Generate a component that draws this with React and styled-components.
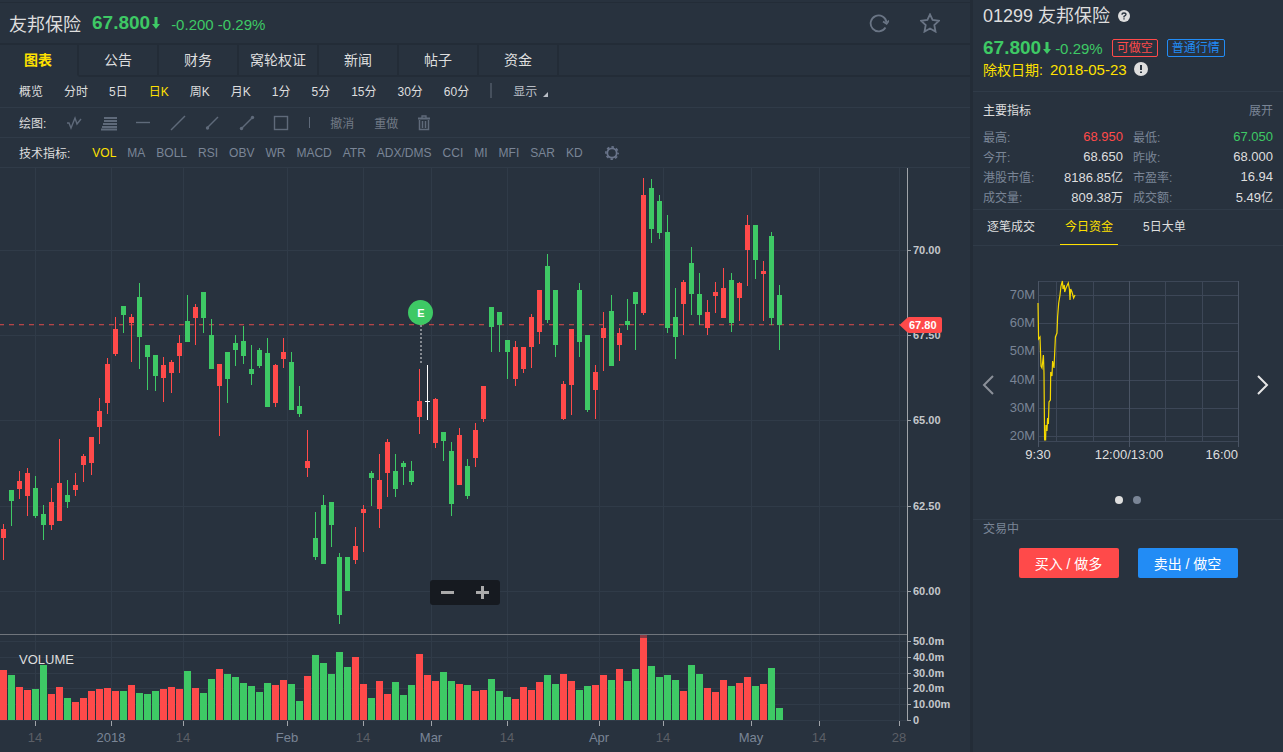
import React, { useState } from "react";
import styled, { createGlobalStyle } from "styled-components";

const GREEN = "#3ec965";
const RED = "#ff4a4a";
const YELLOW = "#ffe100";
const GRAY = "#7a8596";
const BG = "#28323e";
const LINE = "#303b48";
const DARK = "#232c37";

const tabs = ["图表", "公告", "财务", "窝轮权证", "新闻", "帖子", "资金"];
const periods = ["概览", "分时", "5日", "日K", "周K", "月K", "1分", "5分", "15分", "30分", "60分"];
const indicators = [
  "VOL", "MA", "BOLL", "RSI", "OBV", "WR", "MACD", "ATR",
  "ADX/DMS", "CCI", "MI", "MFI", "SAR", "KD",
];

const stats = [
  { label: "最高:", value: "68.950", color: RED },
  { label: "最低:", value: "67.050", color: GREEN },
  { label: "今开:", value: "68.650" },
  { label: "昨收:", value: "68.000" },
  { label: "港股市值:", value: "8186.85", unit: "亿" },
  { label: "市盈率:", value: "16.94" },
  { label: "成交量:", value: "809.38", unit: "万" },
  { label: "成交额:", value: "5.49", unit: "亿" },
];

// [color, high, low, body top, body bottom, volume]
const candles = [
  ["r", 524, 560, 529, 538, 50], ["g", 490, 526, 490, 501, 45],
  ["r", 471, 499, 481, 489, 33], ["r", 468, 516, 473, 496, 30],
  ["g", 476, 518, 488, 516, 31], ["g", 505, 540, 514, 525, 55],
  ["r", 488, 530, 502, 525, 26], ["r", 439, 521, 483, 521, 33],
  ["g", 480, 508, 495, 502, 22], ["r", 473, 496, 485, 490, 18],
  ["r", 454, 482, 456, 465, 22], ["r", 437, 475, 437, 463, 29],
  ["r", 398, 444, 411, 427, 31], ["r", 358, 414, 364, 403, 32],
  ["r", 317, 356, 329, 354, 29], ["g", 306, 333, 306, 315, 29],
  ["r", 314, 362, 317, 323, 35], ["g", 283, 369, 297, 337, 27],
  ["g", 345, 390, 345, 357, 26], ["g", 355, 391, 355, 376, 29],
  ["r", 357, 402, 365, 378, 31], ["r", 360, 393, 362, 373, 33],
  ["r", 335, 373, 343, 356, 31], ["g", 295, 342, 321, 342, 49],
  ["r", 304, 345, 307, 318, 32], ["g", 292, 333, 292, 318, 27],
  ["g", 319, 369, 335, 369, 41], ["r", 364, 436, 364, 386, 51],
  ["g", 352, 403, 352, 379, 46], ["g", 335, 366, 343, 350, 43],
  ["g", 326, 364, 341, 356, 37], ["g", 345, 385, 369, 374, 34],
  ["g", 348, 368, 350, 366, 28], ["g", 338, 407, 353, 407, 37],
  ["r", 364, 407, 365, 403, 35], ["r", 338, 368, 352, 359, 40],
  ["g", 352, 410, 362, 410, 36], ["g", 386, 417, 406, 414, 19],
  ["r", 430, 477, 461, 468, 44], ["g", 512, 560, 538, 557, 65],
  ["g", 495, 564, 505, 564, 57], ["g", 502, 547, 502, 525, 46],
  ["g", 553, 624, 557, 615, 68], ["g", 557, 591, 557, 591, 53],
  ["r", 527, 564, 546, 560, 63], ["r", 505, 552, 509, 513, 36],
  ["g", 471, 506, 473, 478, 22], ["r", 454, 528, 480, 509, 39],
  ["r", 439, 497, 442, 473, 26], ["g", 454, 497, 471, 489, 38],
  ["g", 461, 485, 463, 467, 25], ["g", 461, 485, 471, 482, 35],
  ["r", 369, 434, 401, 417, 66], ["w", 365, 420, 401, 402, 45],
  ["r", 398, 448, 399, 443, 39], ["g", 432, 461, 432, 441, 48],
  ["g", 442, 516, 451, 504, 39], ["r", 428, 485, 435, 485, 36],
  ["g", 459, 499, 466, 496, 35], ["r", 423, 467, 430, 458, 29],
  ["r", 386, 422, 386, 419, 30], ["g", 307, 352, 307, 327, 41],
  ["g", 312, 352, 312, 325, 29], ["g", 340, 379, 340, 352, 23],
  ["r", 341, 386, 347, 379, 21], ["r", 347, 373, 347, 369, 33],
  ["r", 314, 368, 317, 347, 30], ["r", 290, 344, 290, 332, 38],
  ["g", 254, 323, 266, 320, 45], ["g", 290, 357, 290, 345, 36],
  ["r", 381, 420, 384, 419, 46], ["r", 329, 415, 329, 385, 39],
  ["g", 283, 357, 290, 342, 30], ["g", 335, 412, 335, 410, 34],
  ["r", 365, 419, 372, 390, 35], ["r", 312, 371, 328, 338, 45],
  ["g", 295, 366, 311, 366, 40], ["r", 328, 361, 333, 345, 51],
  ["g", 299, 330, 321, 325, 39], ["g", 292, 350, 292, 304, 51],
  ["r", 178, 315, 195, 313, 85], ["g", 179, 243, 188, 229, 54],
  ["g", 195, 239, 201, 233, 43], ["g", 215, 333, 232, 328, 45],
  ["g", 288, 359, 317, 337, 40], ["r", 280, 335, 282, 304, 29],
  ["g", 247, 315, 263, 294, 55], ["g", 273, 325, 294, 315, 46],
  ["r", 300, 335, 312, 328, 32], ["r", 282, 313, 292, 296, 28],
  ["r", 268, 318, 288, 318, 40], ["g", 273, 332, 280, 323, 34],
  ["r", 282, 321, 283, 298, 37], ["r", 215, 286, 225, 250, 43],
  ["g", 225, 279, 225, 260, 34], ["r", 261, 321, 271, 274, 36],
  ["g", 232, 325, 236, 318, 52], ["g", 285, 350, 295, 325, 12],
];

const candleColors = { r: RED, g: GREEN, w: "#ffffff" };

const dates = [
  [35, "14"], [111, "2018"], [183, "14"], [287, "Feb"], [363, "14"], [431, "Mar"],
  [507, "14"], [599, "Apr"], [663, "14"], [751, "May"], [819, "14"], [899, "28"],
];
const prices = [[250, "70.00"], [335, "67.50"], [420, "65.00"], [506, "62.50"], [591, "60.00"]];
const volumes = [
  [641, "50.0m"], [657, "40.0m"], [673, "30.0m"], [688, "20.0m"], [704, "10.00m"], [720, "0"],
];

export default function App() {
  const [tab, setTab] = useState("图表");
  const [period, setPeriod] = useState("日K");
  const [indicator, setIndicator] = useState("VOL");

  return (
    <>
      <GlobalStyle />
      <Page>
        <Main>
          <TopStrip />
          <Header>
            <StockName>友邦保险</StockName>
            <Price>67.800</Price>
            <DownArrow />
            <Change>-0.200 -0.29%</Change>
            <HeaderActions>
              <IconButton aria-label="刷新">
                <RefreshIcon />
              </IconButton>
              <IconButton aria-label="收藏">
                <StarIcon />
              </IconButton>
            </HeaderActions>
          </Header>
          <Tabs>
            {tabs.map((t) => (
              <Tab key={t} $active={t === tab} onClick={() => setTab(t)}>
                {t}
              </Tab>
            ))}
            <TabsRest />
          </Tabs>
          <PeriodBar $gap={21}>
            {periods.map((p) => (
              <ToolButton key={p} $active={p === period} $light onClick={() => setPeriod(p)}>
                {p}
              </ToolButton>
            ))}
            <Divider />
            <DisplayButton>
              显示
              <svg width="5" height="5">
                <path d="M5 0V5H0Z" fill="#b9bec6" />
              </svg>
            </DisplayButton>
          </PeriodBar>
          <Toolbar $gap={20}>
            <ToolLabel>绘图:</ToolLabel>
            <DrawTools />
            <ThinDivider />
            <ToolButton $muted>撤消</ToolButton>
            <ToolButton $muted>重做</ToolButton>
            <IconButton aria-label="删除">
              <TrashIcon />
            </IconButton>
          </Toolbar>
          <Toolbar $gap={22}>
            <ToolLabel>技术指标:</ToolLabel>
            <Indicators>
              {indicators.map((name) => (
                <ToolButton
                  key={name}
                  $active={name === indicator}
                  onClick={() => setIndicator(name)}
                >
                  {name}
                </ToolButton>
              ))}
            </Indicators>
            <IconButton aria-label="设置">
              <GearIcon />
            </IconButton>
          </Toolbar>
          <ChartArea>
            <StockChart />
            <ZoomControl>
              <ZoomButton aria-label="缩小">
                <svg width="13" height="13">
                  <rect y="5" width="13" height="3" fill="#aaaaaa" />
                </svg>
              </ZoomButton>
              <ZoomButton aria-label="放大">
                <svg width="13" height="13" fill="#aaaaaa">
                  <rect y="5" width="13" height="3" />
                  <rect x="5" width="3" height="13" />
                </svg>
              </ZoomButton>
            </ZoomControl>
          </ChartArea>
        </Main>
        <SidePanel />
      </Page>
    </>
  );
}

function SidePanel() {
  const [tab, setTab] = useState("今日资金");

  return (
    <Side>
      <Quote>
        <QuoteTitle>
          01299 友邦保险
          <svg width="12" height="12">
            <circle cx="6" cy="6" r="6" fill="#dedede" />
            <path
              d="M4 4.8Q4 3 6 3Q8 3 8 4.6Q8 5.6 6 6.4V7.4M6 8.2V9.6"
              fill="none"
              stroke={BG}
              strokeWidth="1.3"
            />
          </svg>
        </QuoteTitle>
        <QuoteRow>
          <Price>67.800</Price>
          <DownArrow />
          <Change>-0.29%</Change>
          <Tag $color={RED}>可做空</Tag>
          <Tag $color="#228cf5">普通行情</Tag>
        </QuoteRow>
        <DateRow>
          除权日期: <DateValue>2018-05-23</DateValue>
          <svg width="14" height="14">
            <circle cx="7" cy="7" r="7" fill="#dedede" />
            <path d="M7 3V8M7 9.4V11" stroke={BG} strokeWidth="2" />
          </svg>
        </DateRow>
      </Quote>
      <Stats>
        <StatsHead>
          <h3>主要指标</h3>
          <MoreLink href="#more">展开</MoreLink>
        </StatsHead>
        <StatsGrid>
          {stats.map((s) => (
            <Stat key={s.label}>
              <dt>{s.label}</dt>
              <StatValue $color={s.color}>
                {s.value}
                {s.unit ? <small>{s.unit}</small> : ""}
              </StatValue>
            </Stat>
          ))}
        </StatsGrid>
      </Stats>
      <SideTabs>
        {["逐笔成交", "今日资金", "5日大单"].map((t) => (
          <SideTab key={t} $active={t === tab} onClick={() => setTab(t)}>
            {t}
          </SideTab>
        ))}
      </SideTabs>
      <Carousel>
        <IconButton aria-label="上一页">
          <svg width="12" height="20">
            <path d="M11 1L2 10L11 19" fill="none" stroke="#8b9099" strokeWidth="2" />
          </svg>
        </IconButton>
        <FundChart />
        <IconButton aria-label="下一页">
          <svg width="12" height="20">
            <path d="M1 1L10 10L1 19" fill="none" stroke="#e6e6e6" strokeWidth="2" />
          </svg>
        </IconButton>
      </Carousel>
      <Dots>
        <Dot $active aria-label="1" />
        <Dot aria-label="2" />
      </Dots>
      <Trade>
        <Status>交易中</Status>
        <TradeButtons>
          <TradeButton $color={RED}>买入 / 做多</TradeButton>
          <TradeButton $color="#228cf5">卖出 / 做空</TradeButton>
        </TradeButtons>
      </Trade>
    </Side>
  );
}

function StockChart() {
  return (
    <ChartSvg width="970" height="584" viewBox="0 168 970 584" shapeRendering="crispEdges">
      {dates.map(([x]) => (
        <rect key={x} x={x} y="168" width="1" height="552" fill={LINE} />
      ))}
      {[...prices, ...volumes].map(([y]) => (
        <rect key={y} x="0" y={y} width="907" height="1" fill={LINE} />
      ))}
      <rect x="0" y="634" width="907" height="1" fill="#70757c" />
      {candles.map(([c, , , , , vol], i) => (
        <rect
          key={i}
          x={i * 8}
          y={720 - vol}
          width="7"
          height={vol}
          fill={c === "g" ? GREEN : RED}
        />
      ))}
      <rect x="640" y="635" width="7" height="3" fill="#8a3b43" />
      <line
        x1="-1" y1="324.5" x2="900" y2="324.5"
        stroke="#b54448" strokeDasharray="5 5"
      />
      <line
        x1="-1" y1="325.5" x2="900" y2="325.5"
        stroke="#523840" strokeDasharray="5 5"
      />
      {candles.map(([c, high, low, top, bottom], i) => (
        <g key={i} fill={candleColors[c]}>
          <rect x={i * 8 + 3} y={high} width="1" height={low - high} />
          <rect x={i * 8 + 1} y={top} width="5" height={bottom - top} />
        </g>
      ))}

      <rect x="907" y="168" width="1" height="553" fill="#a0a4a9" />
      {[...prices, ...volumes].map(([y, text]) => (
        <g key={y}>
          <rect x="908" y={y} width="3" height="1" fill="#a0a4a9" />
          <AxisText x="913" y={y + 4}>{text}</AxisText>
        </g>
      ))}
      {dates.map(([x, text]) => (
        <g key={x}>
          <rect x={x} y="721" width="1" height="5" fill="#a0a4a9" />
          <DateText x={x} y="742" $month={text !== "14" && text !== "28"}>
            {text}
          </DateText>
        </g>
      ))}

      <line x1="421" y1="325" x2="421" y2="365" stroke="#858a91" strokeWidth="2" strokeDasharray="2 2" />
      <g shapeRendering="geometricPrecision">
        <circle cx="420.5" cy="312.5" r="12.5" fill={GREEN} />
        <PinText x="421" y="317">E</PinText>
        <path d="M899.5 325L907 318Q908 317 909.5 317H940Q942 317 942 319V331Q942 333 940 333H909.5Q908 333 907 332Z" fill={RED} />
        <TagText x="909" y="329">67.80</TagText>
      </g>
      <VolumeTitle x="19" y="664">VOLUME</VolumeTitle>
    </ChartSvg>
  );
}

function FundChart() {
  return (
    <svg width="234" height="218" viewBox="1009 276 234 218">
      <g fill="#3d4757" shapeRendering="crispEdges">
        {[281, 295, 323, 351, 380, 408, 436, 441].map((y) => (
          <rect key={y} x="1038" y={y} width="200" height="1" />
        ))}
        {[1056, 1093, 1165, 1202].map((x) => (
          <rect key={x} x={x} y="281" width="1" height="160" />
        ))}
        {[1038, 1129, 1238].map((x) => (
          <rect key={x} x={x} y="281" width="1" height="166" fill="#4a5464" />
        ))}
      </g>
      {["70M", "60M", "50M", "40M", "30M", "20M"].map((label, i) => (
        <FundText key={label} x="1035" y={299 + Math.round(i * 28.2)} textAnchor="end" fill={GRAY}>
          {label}
        </FundText>
      ))}
      <FundText x="1038" y="459" textAnchor="middle" fill="#dedede">9:30</FundText>
      <FundText x="1129" y="459" textAnchor="middle" fill="#dedede">12:00/13:00</FundText>
      <FundText x="1238" y="459" textAnchor="end" fill="#dedede">16:00</FundText>
      <polyline
        fill="none"
        stroke="#f5d800"
        strokeWidth="1.2"
        points="1038,303 1038.6,339 1040,337 1041,366 1042,368 1043.4,355 1044,373 1044.6,440 1045.6,440 1046,425 1047,431 1047.6,418 1048.4,424 1049,402 1050.4,400 1050.7,372 1052,376 1052.6,361 1054,368 1055.4,337 1057,333 1057.6,317 1058.7,303 1060,295 1061,286 1062.4,281 1063,289 1064.3,285 1064.7,292 1066,288 1068.3,283 1069.4,289 1070,300 1070.7,289 1072,292 1073.6,298 1075,295"
      />
    </svg>
  );
}

function DrawTools() {
  return (
    <DrawGroup>
      <IconButton aria-label="折线">
        <DrawIcon viewBox="0 0 16 16">
          <path d="M1 8H3L5 13L9 3L11 9L15 4" />
        </DrawIcon>
      </IconButton>
      <IconButton aria-label="黄金分割">
        <DrawIcon viewBox="0 0 16 16">
          <path d="M3 3H16M3 6H16M2 9H16M1 12H16M0 14.5H16" strokeWidth="2" />
        </DrawIcon>
      </IconButton>
      <IconButton aria-label="水平线">
        <DrawIcon viewBox="0 0 16 16">
          <path d="M1 7.5H15" />
        </DrawIcon>
      </IconButton>
      <IconButton aria-label="直线">
        <DrawIcon viewBox="0 0 16 16">
          <path d="M1 15L15 1" />
        </DrawIcon>
      </IconButton>
      <IconButton aria-label="射线">
        <DrawIcon viewBox="0 0 16 16">
          <path d="M3 13L14 2" />
          <circle cx="3.5" cy="13" r="1.7" fill="#5f6a7a" stroke="none" />
        </DrawIcon>
      </IconButton>
      <IconButton aria-label="线段">
        <DrawIcon viewBox="0 0 16 16">
          <path d="M3 13L13 3" />
          <circle cx="2.5" cy="13.5" r="1.7" fill="#5f6a7a" stroke="none" />
          <circle cx="13.5" cy="2.5" r="1.7" fill="#5f6a7a" stroke="none" />
        </DrawIcon>
      </IconButton>
      <IconButton aria-label="矩形">
        <DrawIcon viewBox="0 0 16 16">
          <rect x="1.5" y="1.5" width="13" height="13" />
        </DrawIcon>
      </IconButton>
    </DrawGroup>
  );
}

function DownArrow() {
  return (
    <ArrowSvg width="8" height="12" viewBox="0 0 8 12">
      <path d="M2.5 0H5.5V7H8L4 12L0 7H2.5Z" fill={GREEN} />
    </ArrowSvg>
  );
}

function RefreshIcon() {
  return (
    <svg width="20" height="20" fill="none" stroke="#6a7585" strokeWidth="1.8">
      <path d="M16.5 14.5A8 8 0 1 1 17.6 9.5" />
      <path d="M14 8.5L17.6 10.8L20 7.5" />
    </svg>
  );
}

function StarIcon() {
  return (
    <svg width="20" height="20" viewBox="0 0 20 20">
      <path
        d="M10 1.4L12.6 7L18.8 7.8L14.3 12L15.5 18.6L10 15.5L4.5 18.6L5.7 12L1.2 7.8L7.4 7Z"
        fill="none"
        stroke="#6a7585"
        strokeWidth="1.8"
      />
    </svg>
  );
}

function TrashIcon() {
  return (
    <svg width="12" height="16" fill="none" stroke="#5f6a7a">
      <path d="M0 3.5H12" strokeWidth="2" />
      <path d="M4 3V1H8V3" strokeWidth="1.3" />
      <path d="M1.5 5V14.5H10.5V5" strokeWidth="1.5" />
      <path d="M4.5 6V13M7.5 6V13" strokeWidth="1.5" />
    </svg>
  );
}

function GearIcon() {
  return (
    <svg width="14" height="14" viewBox="0 0 14 14" fill="none" stroke="#69748a">
      <circle cx="7" cy="7" r="4.7" strokeWidth="1.8" />
      <circle cx="7" cy="7" r="6.1" strokeWidth="1.6" strokeDasharray="2.6 2.19" strokeDashoffset="1.3" />
    </svg>
  );
}

const GlobalStyle = createGlobalStyle`
  * {
    box-sizing: border-box;
  }

  body {
    margin: 0;
    background: ${BG};
    color: #dedede;
    font-family: "Liberation Sans", "Noto Sans CJK SC", sans-serif;
    font-size: 12px;
  }

  button {
    font: inherit;
    color: inherit;
    background: none;
    border: 0;
    padding: 0;
    cursor: pointer;
    white-space: nowrap;
  }

  svg {
    display: block;
    flex: none;
  }
`;

const Page = styled.div`
  display: flex;
  min-height: 100vh;
`;

const Main = styled.main`
  flex: 1;
  min-width: 0;
`;

const TopStrip = styled.div`
  height: 3px;
  border-bottom: 1px solid ${DARK};
`;

const Header = styled.header`
  display: flex;
  align-items: center;
  height: 42px;
  padding: 0 30px 0 9px;
  border-bottom: 2px solid ${DARK};
`;

const StockName = styled.h1`
  margin: 0 11px 0 0;
  font-size: 18px;
  font-weight: 400;
`;

const Price = styled.span`
  color: ${GREEN};
  font-size: 19px;
  font-weight: 700;
`;

const ArrowSvg = styled.svg`
  margin-left: 2px;
`;

const Change = styled.span`
  margin-left: 11px;
  padding-top: 2px;
  color: ${GREEN};
  font-size: 15px;
`;

const HeaderActions = styled.div`
  display: flex;
  gap: 31px;
  margin-left: auto;
`;

const IconButton = styled.button`
  display: flex;
  align-items: center;
  justify-content: center;
`;

const Tabs = styled.nav`
  display: flex;
  height: 32px;
  margin-left: -1px;
`;

const Tab = styled.button`
  width: 80px;
  padding-bottom: 2px;
  border-right: 2px solid ${DARK};
  border-bottom: 2px solid ${(p) => (p.$active ? "transparent" : DARK)};
  color: ${(p) => (p.$active ? YELLOW : "#dedede")};
  font-size: 14px;
  font-weight: ${(p) => (p.$active ? 700 : 400)};
`;

const TabsRest = styled.div`
  flex: 1;
  border-bottom: 2px solid ${DARK};
`;

const Toolbar = styled.div`
  display: flex;
  align-items: center;
  gap: ${(p) => p.$gap}px;
  height: 30px;
  padding-left: 19px;
  border-bottom: 1px solid ${LINE};
`;

const PeriodBar = styled(Toolbar)`
  height: 31px;
  padding-bottom: 3px;
`;

const ToolButton = styled.button`
  color: ${(p) => (p.$active ? YELLOW : p.$light ? "#dedede" : p.$muted ? "#727a86" : GRAY)};
`;

const ToolLabel = styled.span`
  color: #dedede;
`;

const Divider = styled.span`
  width: 2px;
  height: 15px;
  background: #46505d;
`;

const ThinDivider = styled.span`
  width: 1px;
  height: 11px;
  background: #5f6a7a;
`;

const DisplayButton = styled.button`
  display: flex;
  align-items: flex-end;
  gap: 6px;
  color: #b9bec6;

  svg {
    margin-bottom: 2px;
  }
`;

const DrawGroup = styled.div`
  display: flex;
  justify-content: space-between;
  width: 223px;
`;

const DrawIcon = styled.svg`
  width: 16px;
  height: 16px;
  fill: none;
  stroke: #5f6a7a;
  stroke-width: 1.4px;
`;

const Indicators = styled.div`
  display: flex;
  gap: 11px;
`;

const ChartArea = styled.div`
  position: relative;
  overflow: hidden;
`;

const ChartSvg = styled.svg`
  font-family: "Liberation Sans", sans-serif;
`;

const AxisText = styled.text`
  font-size: 11px;
  font-weight: 700;
  fill: #c4c7cb;
`;

const DateText = styled.text`
  font-size: 13px;
  text-anchor: middle;
  fill: ${(p) => (p.$month ? GRAY : "#5b5f66")};
`;

const PinText = styled.text`
  font-size: 11px;
  font-weight: 700;
  text-anchor: middle;
  fill: #fff;
`;

const TagText = styled.text`
  font-size: 11px;
  font-weight: 700;
  fill: #fff;
`;

const VolumeTitle = styled.text`
  font-size: 13px;
  fill: #dedede;
`;

const FundText = styled.text`
  font-size: 13px;
`;

// floats over the lower part of the price pane
const ZoomControl = styled.div`
  position: absolute;
  left: 430px;
  top: 412px;
  display: flex;
  width: 70px;
  height: 25px;
  border-radius: 3px;
  background: #161a20;
`;

const ZoomButton = styled.button`
  flex: 1;
  display: flex;
  align-items: center;
  justify-content: center;
`;

const Side = styled.aside`
  width: 313px;
  border-left: 3px solid ${DARK};
`;

const Quote = styled.section`
  height: 92px;
  padding: 2px 10px 0;
  border-bottom: 1px solid ${LINE};
`;

const QuoteTitle = styled.h2`
  display: flex;
  align-items: center;
  gap: 8px;
  height: 24px;
  margin: 0 0 10px;
  font-size: 18px;
  font-weight: 400;

  svg {
    margin-top: 3px;
  }
`;

const QuoteRow = styled.div`
  display: flex;
  align-items: center;
  height: 23px;

  ${Change} {
    margin-left: 4px;
  }
`;

const Tag = styled.span`
  margin-left: 9px;
  padding: 0 4px;
  border: 1px solid ${(p) => p.$color};
  border-radius: 2px;
  color: ${(p) => p.$color};
  line-height: 16px;
`;

const DateRow = styled.div`
  display: flex;
  align-items: center;
  gap: 7px;
  height: 20px;
  color: ${YELLOW};
  font-size: 14px;
`;

const DateValue = styled.span`
  font-size: 15px;
`;

const Stats = styled.section`
  height: 118px;
  padding: 6px 10px 0;
  border-bottom: 1px solid ${LINE};
`;

const StatsHead = styled.div`
  display: flex;
  align-items: center;
  justify-content: space-between;
  height: 22px;
  margin-bottom: 6px;

  h3 {
    margin: 0;
    font-size: 12px;
    font-weight: 400;
  }
`;

const MoreLink = styled.a`
  color: ${GRAY};
  text-decoration: none;
`;

const StatsGrid = styled.dl`
  display: grid;
  grid-template-columns: 1fr 1fr;
  column-gap: 10px;
  margin: 0;
`;

const Stat = styled.div`
  display: flex;
  align-items: center;
  justify-content: space-between;
  height: 20px;

  dt {
    color: ${GRAY};
  }
`;

const StatValue = styled.dd`
  margin: 0;
  color: ${(p) => p.$color || "#dedede"};
  font-size: 13px;

  small {
    font-size: 12px;
  }
`;

const SideTabs = styled.nav`
  display: flex;
  gap: 20px;
  height: 36px;
  padding-left: 9px;
  border-bottom: 1px solid ${LINE};
`;

const SideTab = styled.button`
  padding: 0 5px 3px;
  border-bottom: 1px solid ${(p) => (p.$active ? YELLOW : "transparent")};
  color: ${(p) => (p.$active ? YELLOW : "#dedede")};
`;

const Carousel = styled.div`
  display: flex;
  align-items: center;
  justify-content: space-between;
  padding: 30px 14px 0 9px;
`;

const Dots = styled.div`
  display: flex;
  justify-content: center;
  gap: 10px;
  padding: 2px 0 15px;
`;

const Dot = styled.button`
  width: 8px;
  height: 8px;
  border-radius: 4px;
  background: ${(p) => (p.$active ? "#dedede" : GRAY)};
`;

const Trade = styled.section`
  border-top: 1px solid ${LINE};
  padding: 0 10px;
`;

const Status = styled.div`
  height: 28px;
  line-height: 18px;
  color: ${GRAY};
`;

const TradeButtons = styled.div`
  display: flex;
  justify-content: center;
  gap: 19px;
`;

const TradeButton = styled.button`
  width: 100px;
  height: 30px;
  border-radius: 2px;
  background: ${(p) => p.$color};
  color: #fff;
  font-size: 14px;
`;
